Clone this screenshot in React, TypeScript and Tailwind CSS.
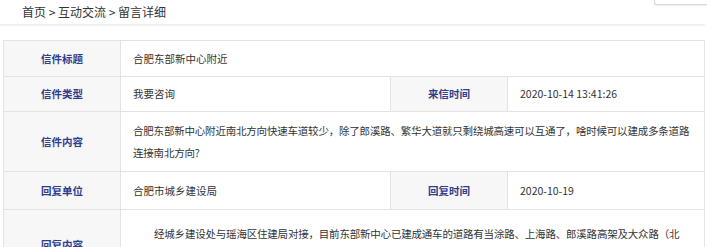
const font = { fontFamily: '"Noto Sans CJK SC", "Noto Sans", sans-serif' }

const Label = ({ text }: { text: string }) => (
  <div className="w-[117px] shrink-0 bg-[#f7f7f8] border-r border-[#e3e3e3] flex items-center justify-center text-[10.5px] font-bold text-[#2f3d8c]">
    {text}
  </div>
)

const Value = ({ text, className = "" }: { text: string; className?: string }) => (
  <div className={`flex items-center pl-[12px] text-[10.5px] text-[#333] ${className}`}>{text}</div>
)

export default function App() {
  return (
    <div className="w-[707px] h-[247px] overflow-hidden bg-white" style={font}>
      <div className="flex h-[26px] border-b-2 border-[#f1f1f1] w-[705px]">
        <div className="flex items-center pl-[22px] text-[12px] text-[#333] whitespace-pre">首页 &gt; 互动交流 &gt; 留言详细</div>
        <div className="ml-auto mr-[-2px] h-[5px] w-[53px] border-l border-b border-[#d8d8d8] rounded-bl-[3px] shadow-[0_1px_2px_rgba(0,0,0,0.08)]" />
      </div>

      <div className="ml-[3px] mt-[14px] w-[702px] border border-[#e3e3e3] border-b-0">
        <div className="flex h-[36px] border-b border-[#e3e3e3]">
          <Label text="信件标题" />
          <Value text="合肥东部新中心附近" />
        </div>

        <div className="flex h-[35px] border-b border-[#e3e3e3]">
          <Label text="信件类型" />
          <Value text="我要咨询" className="w-[270px] border-r border-[#e3e3e3]" />
          <Label text="来信时间" />
          <Value text="2020-10-14 13:41:26" />
        </div>

        <div className="flex h-[60px] border-b border-[#e3e3e3]">
          <Label text="信件内容" />
          <div className="flex-1 flex items-center pl-[12px] text-[10.5px] text-[#333] leading-[22px] whitespace-nowrap tracking-[-0.2px]">
            <p>
              合肥东部新中心附近南北方向快速车道较少，除了郎溪路、繁华大道就只剩绕城高速可以互通了，啥时候可以建成多条道路
              <br />
              连接南北方向?
            </p>
          </div>
        </div>

        <div className="flex h-[38px] border-b border-[#e3e3e3]">
          <Label text="回复单位" />
          <Value text="合肥市城乡建设局" className="w-[270px] border-r border-[#e3e3e3]" />
          <Label text="回复时间" />
          <Value text="2020-10-19" />
        </div>

        <div className="flex">
          <Label text="回复内容" />
          <div className="flex-1 pl-[12px] py-[13px] text-[10.5px] text-[#333] leading-[22px] whitespace-nowrap tracking-[-0.2px]">
            <p className="indent-[21px]">
              经城乡建设处与瑶海区住建局对接，目前东部新中心已建成通车的道路有当涂路、上海路、郎溪路高架及大众路（北
              <br />
              二环至铜陵路段），南北向道路还有规划中的站北路、新海大道等。
            </p>
          </div>
        </div>
      </div>
    </div>
  )
}
